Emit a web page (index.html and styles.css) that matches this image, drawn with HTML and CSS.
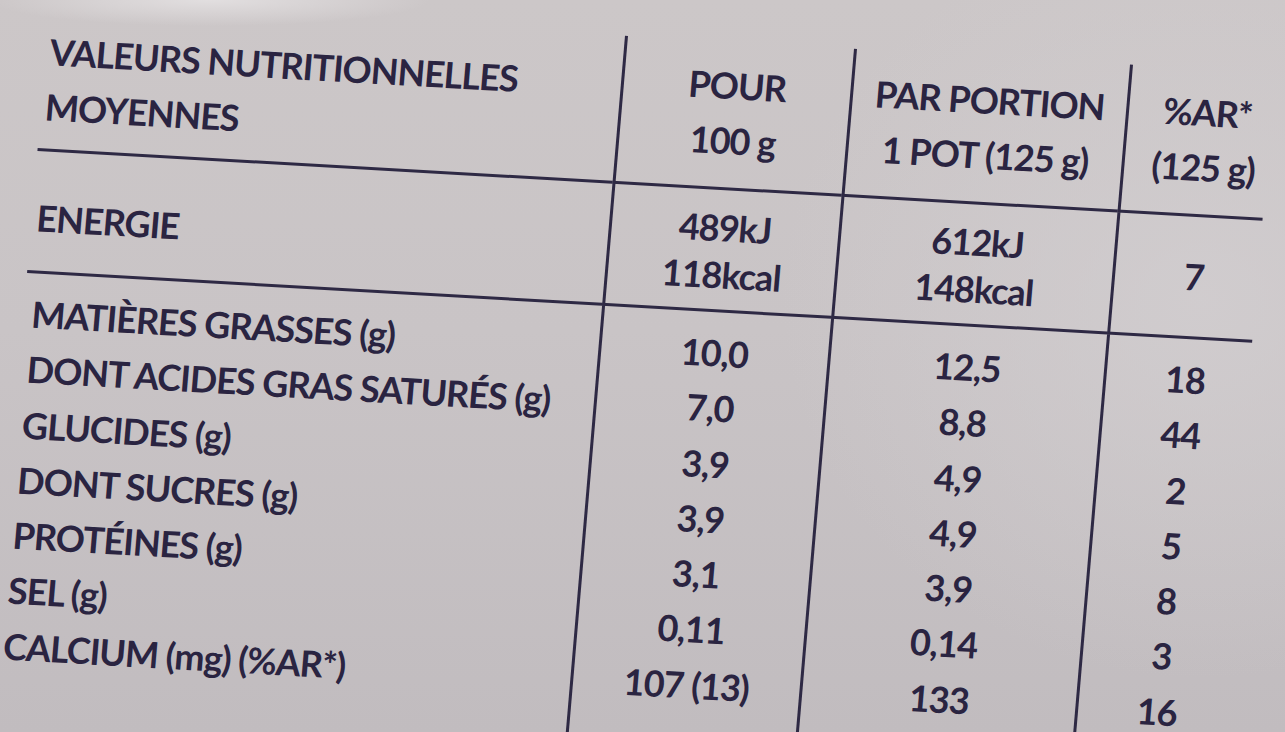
FILE: index.html
```html
<!DOCTYPE html>
<html lang="fr">
<head>
<meta charset="utf-8">
<title>Valeurs nutritionnelles moyennes</title>
<link rel="stylesheet" href="styles.css">
</head>
<body>
<main class="page">
  <div class="nutri">
    <div class="cell head name">VALEURS NUTRITIONNELLES<br>MOYENNES</div>
    <div class="cell head col">POUR<br>100 g</div>
    <div class="cell head col">PAR PORTION<br>1 POT (125 g)</div>
    <div class="cell head col pct">%AR*<br>(125 g)</div>

    <div class="cell energy name">ENERGIE</div>
    <div class="cell energy col">489kJ<br>118kcal</div>
    <div class="cell energy col">612kJ<br>148kcal</div>
    <div class="cell energy col pct single">7</div>

    <div class="cell body name">
      <div>MATIÈRES GRASSES (g)</div>
      <div>DONT ACIDES GRAS SATURÉS (g)</div>
      <div>GLUCIDES (g)</div>
      <div>DONT SUCRES (g)</div>
      <div>PROTÉINES (g)</div>
      <div>SEL (g)</div>
      <div>CALCIUM (mg) (%AR*)</div>
    </div>
    <div class="cell body col">
      <div>10,0</div>
      <div>7,0</div>
      <div>3,9</div>
      <div>3,9</div>
      <div>3,1</div>
      <div>0,11</div>
      <div>107 (13)</div>
    </div>
    <div class="cell body col">
      <div>12,5</div>
      <div>8,8</div>
      <div>4,9</div>
      <div>4,9</div>
      <div>3,9</div>
      <div>0,14</div>
      <div>133</div>
    </div>
    <div class="cell body col pct">
      <div>18</div>
      <div>44</div>
      <div>2</div>
      <div>5</div>
      <div>8</div>
      <div>3</div>
      <div>16</div>
    </div>
  </div>
</main>
</body>
</html>
```

FILE: styles.css
```css
html, body {
  margin: 0;
  padding: 0;
}

body {
  background: #c8c3c5;
}

.page {
  box-sizing: border-box;
  width: 1285px;
  height: 732px;
  overflow: hidden;
  padding: 3px 0 0 50px;
  background:
    radial-gradient(ellipse 220px 26px at 210px 0, rgba(228, 225, 226, 0.9), rgba(228, 225, 226, 0)),
    radial-gradient(ellipse 420px 380px at 1200px 300px, rgba(210, 206, 208, 0.8), rgba(210, 206, 208, 0)),
    linear-gradient(180deg, #ccc7c8 0%, #c9c4c6 45%, #c1bcbf 100%);
}

.nutri {
  display: grid;
  grid-template-columns: 575px 229px 276px 145px;
  grid-template-rows: 148px 122px auto;
  transform-origin: 0 0;
  transform: matrix(1, 0.057, -0.085, 1, 0, 0);
  font-family: Lato, "Open Sans", "Liberation Sans", sans-serif;
  font-weight: 700;
  font-size: 36px;
  letter-spacing: -1px;
  color: #2a2441;
}

.cell {
  box-sizing: border-box;
}

.col {
  border-left: 3px solid #2e2944;
  text-align: center;
}

.pct {
  padding-left: 15px;
}

.head {
  border-bottom: 3px solid #2e2944;
  line-height: 55px;
}

.head.name {
  padding: 21px 0 0 4px;
}

.head.col {
  padding-top: 16px;
}

.energy {
  border-bottom: 3px solid #2e2944;
  line-height: 47px;
}

.energy.name {
  padding: 43px 0 0 5px;
}

.energy.col {
  padding-top: 14px;
}

.energy.single {
  padding-top: 36px;
}

.body {
  line-height: 55.3px;
  padding-top: 13px;
  padding-bottom: 110px;
}

.body.name {
  padding-left: 8px;
  white-space: nowrap;
}
```
